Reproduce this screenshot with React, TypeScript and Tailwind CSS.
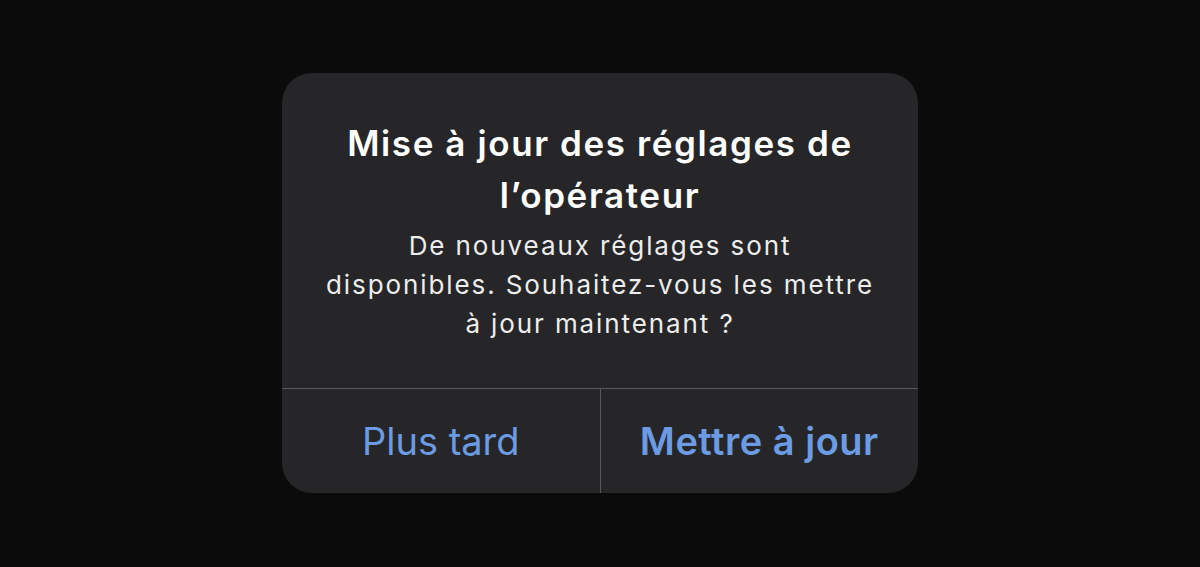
export default function App() {
  return (
    <div
      className="flex h-[567px] w-[1200px] items-start justify-center bg-[#0b0b0b] pt-[73px]"
      style={{ fontFamily: "Inter, 'Open Sans', sans-serif" }}
    >
      <div className="flex h-[420px] w-[636px] flex-col overflow-hidden rounded-[30px] bg-[#262628]">
        <div className="flex h-[315px] flex-col items-center px-6 pt-[44px] text-center">
          <h1 className="whitespace-nowrap text-[35px] font-semibold leading-[52px] tracking-[1.6px] text-white">
            Mise à jour des réglages de
            <br />
            l’opérateur
          </h1>
          <p className="mt-[5px] whitespace-nowrap text-[26px] leading-[39px] tracking-[1.9px] text-[#ededed]">
            De nouveaux réglages sont
            <br />
            disponibles. Souhaitez-vous les mettre
            <br />
            à jour maintenant ?
          </p>
        </div>
        <div className="flex flex-1 border-t border-[#58585a]">
          <button className="flex flex-1 items-center justify-center text-[38px] text-[#6b9be3]">
            Plus tard
          </button>
          <div className="w-px bg-[#58585a]" />
          <button className="flex flex-1 items-center justify-center text-[38px] font-semibold tracking-[0.5px] text-[#6b9be3]">
            Mettre à jour
          </button>
        </div>
      </div>
    </div>
  );
}
